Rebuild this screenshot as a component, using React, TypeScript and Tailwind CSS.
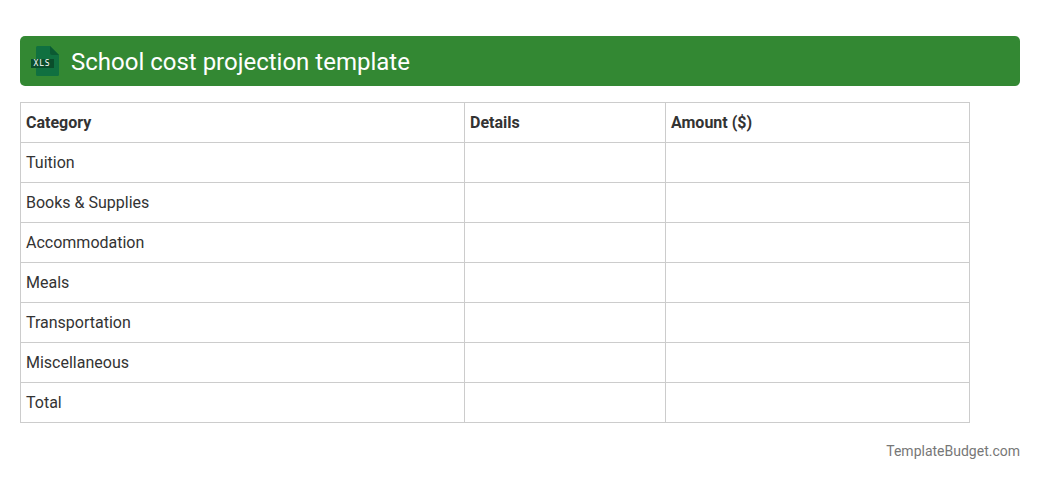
export default function App() {
  const rows = ["Tuition", "Books & Supplies", "Accommodation", "Meals", "Transportation", "Miscellaneous", "Total"];
  const th = "border border-[#cccccc] px-[5px] text-left font-bold h-10 p-0";
  const td = "border border-[#cccccc] px-[5px] text-left font-normal h-10 p-0";
  return (
    <div className="w-[1040px] h-[480px] bg-white px-5 pt-9 font-['Roboto',sans-serif] text-[#333333] overflow-hidden">
      <div className="h-[50px] bg-[#338833] rounded-[5px] flex items-center pl-[10px] gap-[10px]">
        <svg width="31" height="32" viewBox="0 0 31 32" className="shrink-0">
          <path d="M6 2.500 Q6 1 7.500 1 H20 L29 10 V29.500 Q29 31 27.500 31 H7.500 Q6 31 6 29.500 Z" fill="#107040" />
          <path d="M20 1 L29 10 H22 Q20 10 20 8 Z" fill="#0b5a32" />
          <rect x="1" y="14" width="23" height="9" fill="#0a4d2b" />
          <text x="12" y="21" textAnchor="middle" fontFamily="'DejaVu Sans Mono', monospace" fontSize="8" letterSpacing="0.8" fill="#ffffff">XLS</text>
        </svg>
        <h1 className="text-[24px] leading-[30px] font-normal text-white pt-[2px]">School cost projection template</h1>
      </div>
      <table className="mt-4 border-collapse table-fixed w-[949px] text-[16px] leading-6">
        <colgroup>
          <col className="w-[444px]" />
          <col className="w-[201px]" />
          <col className="w-[304px]" />
        </colgroup>
        <thead>
          <tr>
            <th className={th}>Category</th>
            <th className={th}>Details</th>
            <th className={th}>Amount ($)</th>
          </tr>
        </thead>
        <tbody>
          {rows.map((r) => (
            <tr key={r}>
              <td className={td}>{r}</td>
              <td className={td}></td>
              <td className={td}></td>
            </tr>
          ))}
        </tbody>
      </table>
      <div className="mt-[18px] text-right text-[14px] leading-5 text-[#777777]">TemplateBudget.com</div>
    </div>
  );
}
